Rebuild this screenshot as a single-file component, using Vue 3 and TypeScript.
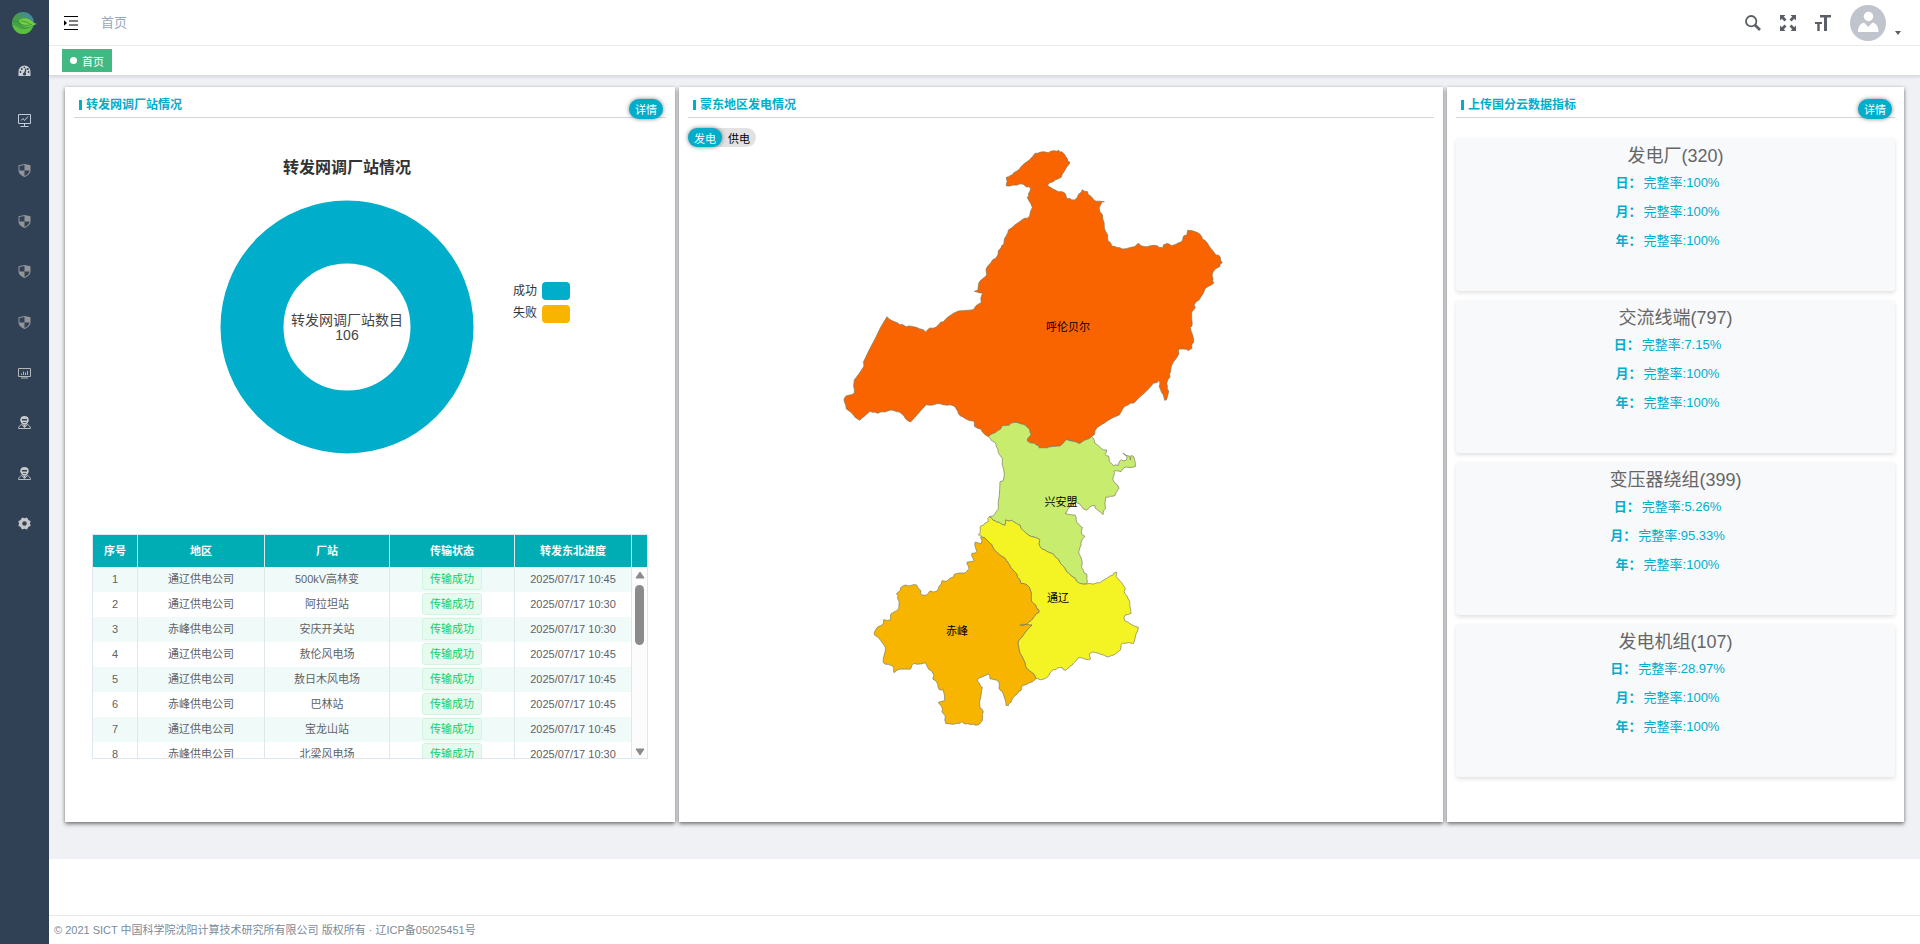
<script setup lang="ts">
import { ref } from 'vue'

interface MenuItem { icon: string; label: string }
interface Station { region: string; name: string; time: string }
interface Metric { title: string; rows: { label: string; value: string }[] }
interface Area { name: string; color: string; x: number; y: number; shape: string }

const menu: MenuItem[] = [
  { icon: 'dashboard', label: '首页' },
  { icon: 'monitor', label: '监控' },
  { icon: 'shield', label: '校验一' },
  { icon: 'shield', label: '校验二' },
  { icon: 'shield', label: '校验三' },
  { icon: 'shield', label: '校验四' },
  { icon: 'screen', label: '统计' },
  { icon: 'people', label: '用户' },
  { icon: 'people', label: '角色' },
  { icon: 'gear', label: '设置' },
]

const columns = ['序号', '地区', '厂站', '传输状态', '转发东北进度']

const stations: Station[] = [
  { region: '通辽供电公司', name: '500kV高林变', time: '2025/07/17 10:45' },
  { region: '通辽供电公司', name: '阿拉坦站', time: '2025/07/17 10:30' },
  { region: '赤峰供电公司', name: '安庆开关站', time: '2025/07/17 10:30' },
  { region: '通辽供电公司', name: '敖伦风电场', time: '2025/07/17 10:45' },
  { region: '通辽供电公司', name: '敖日木风电场', time: '2025/07/17 10:45' },
  { region: '赤峰供电公司', name: '巴林站', time: '2025/07/17 10:45' },
  { region: '通辽供电公司', name: '宝龙山站', time: '2025/07/17 10:45' },
  { region: '赤峰供电公司', name: '北梁风电场', time: '2025/07/17 10:30' },
]

function metric(title: string, day: string, month: string, year: string): Metric {
  return {
    title,
    rows: [
      { label: '日：', value: day },
      { label: '月：', value: month },
      { label: '年：', value: year },
    ],
  }
}

const metrics: Metric[] = [
  metric('发电厂(320)', '100%', '100%', '100%'),
  metric('交流线端(797)', '7.15%', '100%', '100%'),
  metric('变压器绕组(399)', '5.26%', '95.33%', '100%'),
  metric('发电机组(107)', '28.97%', '100%', '100%'),
]

const mode = ref<'gen' | 'supply'>('gen')

const areas: Area[] = [
  {
    name: '呼伦贝尔', color: '#fa6400', x: 380, y: 184,
    shape: '645 70 670 65 685 68 715 61 735 75 750 97 727 132 700 155 682 166 715 185 735 190 741 206 763 210 787 179 803 185 821 209 853 215 838 235 848 262 853 293 863 315 864 332 876 349 908 357 943 350 955 340 975 350 1002 346 1030 356 1031 344 1047 342 1055 347 1085 335 1089 322 1100 316 1103 301 1131 307 1155 331 1188 375 1201 382 1207 398 1199 410 1178 429 1181 460 1155 477 1137 510 1122 525 1126 532 1115 546 1116 588 1111 592 1121 630 1116 655 1105 662 1078 657 1072 680 1053 715 1050 740 1043 750 1046 783 1040 809 1034 811 1030 795 1020 775 1018 751 1000 760 942 819 912 831 898 855 860 874 831 893 824 913 814 920 779 941 740 929 728 942 687 951 658 954 644 940 622 933 633 913 628 896 616 886 585 877 567 886 547 887 532 903 505 920 487 906 483 898 463 889 461 873 420 857 402 828 360 821 319 824 272 876 243 850 215 840 178 848 150 844 119 871 79 837 74 803 103 789 103 749 131 710 130 697 201 560 235 580 260 590 284 591 317 606 325 597 348 592 370 575 402 549 460 539 481 520 488 489 463 484 474 480 480 453 500 435 502 410 527 385 535 362 552 335 565 300 608 268 629 258 637 233 622 203 632 175 610 163 580 165 560 168 559 142 577 135 605 108',
  },
  {
    name: '兴安盟', color: '#c8ec6e', x: 373, y: 359,
    shape: '505 920 532 903 547 887 567 886 585 877 616 886 628 896 633 913 622 933 644 940 658 954 687 951 728 942 740 929 779 941 814 920 830 943 845 957 860 960 855 973 866 978 868 995 880 1007 895 1006 904 989 918 991 920 977 909 969 930 979 931 990 934 976 944 990 946 1010 912 1013 903 1025 881 1024 878 1045 897 1075 885 1097 857 1101 857 1135 849 1154 832 1139 824 1126 810 1130 800 1140 785 1130 770 1118 752 1128 742 1140 735 1150 765 1155 771 1178 788 1193 785 1212 795 1219 783 1238 777 1272 785 1290 785 1310 800 1332 800 1362 770 1354 740 1325 705 1280 675 1260 660 1250 658 1228 625 1215 600 1185 575 1171 557 1170 555 1186 530 1176 508 1160 525 1152 535 1137 540 1055 550 1052 547 985 535 968 528 943',
  },
  {
    name: '通辽', color: '#f4f424', x: 370, y: 455,
    shape: '508 1160 530 1176 555 1186 557 1170 575 1171 600 1185 625 1215 658 1228 660 1250 675 1260 705 1280 740 1325 770 1354 800 1362 840 1358 870 1338 890 1326 893 1345 916 1375 914 1390 930 1422 933 1450 912 1462 914 1472 955 1492 941 1540 907 1539 895 1565 862 1581 850 1575 820 1566 808 1572 812 1587 775 1583 757 1605 737 1621 727 1613 700 1619 669 1648 648 1646 616 1608 600 1570 595 1533 636 1485 600 1486 625 1477 657 1447 640 1420 632 1383 620 1364 603 1361 585 1327 560 1292 525 1262 510 1240 495 1224 475 1215 482 1188 505 1175',
  },
  {
    name: '赤峰', color: '#f8b500', x: 269, y: 488,
    shape: '482 1220 495 1224 510 1240 525 1262 560 1292 585 1327 603 1361 620 1364 632 1383 640 1420 657 1447 625 1477 600 1486 636 1485 595 1533 600 1570 616 1608 648 1646 607 1667 603 1682 580 1702 565 1727 558 1726 555 1708 540 1680 537 1656 510 1646 505 1632 480 1643 472 1653 487 1672 480 1733 490 1745 482 1778 468 1786 435 1782 425 1775 420 1780 378 1781 376 1758 366 1745 364 1728 355 1717 374 1712 370 1678 357 1678 353 1662 338 1647 340 1633 316 1598 300 1602 282 1600 272 1617 240 1617 222 1628 217 1607 190 1598 196 1551 163 1515 165 1503 190 1480 191 1469 212 1469 213 1452 236 1436 233 1405 229 1391 242 1373 257 1365 290 1365 303 1382 304 1394 312 1396 330 1383 350 1384 366 1352 382 1352 403 1333 435 1329 447 1316 441 1297 463 1293 456 1270 471 1265 466 1236 484 1242',
  },
]

type Point = [number, number]

// Offsets depend only on the midpoint, so neighbouring areas keep a common border.
function roughen(points: Point[]): Point[] {
  return points.flatMap((a, i): Point[] => {
    const b = points[(i + 1) % points.length]
    if (Math.hypot(b[0] - a[0], b[1] - a[1]) < 12) return [a]
    const x = (a[0] + b[0]) / 2
    const y = (a[1] + b[1]) / 2
    return [a, [x + Math.sin(x * 12.9 + y * 7.2) * 2.5, y + Math.sin(x * 5.1 + y * 17.3) * 2.5]]
  })
}

function outline(shape: string): string {
  const n = shape.split(' ').map(Number)
  const points: Point[] = []
  for (let i = 0; i < n.length; i += 2) points.push([n[i], n[i + 1]])
  return roughen(roughen(points)).map(([x, y]) => `${x.toFixed(1)},${y.toFixed(1)}`).join(' ')
}
</script>

<template>
  <div class="app">
    <aside class="sidebar">
      <a class="logo" href="#" aria-label="SICT">
        <svg width="27" height="24" viewBox="0 0 27 24">
          <defs>
            <linearGradient id="globe" x1="0" y1="1" x2="1" y2="0">
              <stop offset="0" stop-color="#3fae3c" />
              <stop offset="0.5" stop-color="#469b4c" />
              <stop offset="1" stop-color="#4382c4" />
            </linearGradient>
          </defs>
          <circle cx="12" cy="12" r="11" fill="url(#globe)" />
          <path d="M1.500 14c3 0 5 3 9 4s8-1 11-3c-1 5-5 8-9.500 8S3 20 1.500 14z" fill="#5cbf3c" />
          <path d="M8 9.500c4-4 11-2 14 2l4 1.500-4.500 1.500c-5 2.500-11 1.500-13.500-5z" fill="#74cf3e" />
          <path d="M2 10c4-1 6 3 10 4s7 0 9-.8M10 10c3 0 6 1 9 3" stroke="#2f8a42" stroke-width=".8" fill="none" />
        </svg>
      </a>
      <nav class="menu">
        <a v-for="(item, i) in menu" :key="i" href="#" :aria-label="item.label">
          <svg v-if="item.icon === 'dashboard'" width="13" height="13" viewBox="0 0 13 13">
            <path d="M.5 12V7.500a6 6 0 0 1 12 0V12z" fill="#cdd0d3" />
            <path d="M6.500 10.500L8 4.500" stroke="#304156" stroke-width="1.300" />
            <circle cx="6.500" cy="10" r="1.600" fill="#304156" />
            <g fill="#304156"><circle cx="2.500" cy="8" r=".9" /><circle cx="3.700" cy="5" r=".9" /><circle cx="6.300" cy="3.400" r=".8" /><circle cx="9.800" cy="5" r=".9" /><circle cx="10.600" cy="8" r=".9" /></g>
          </svg>
          <svg v-else-if="item.icon === 'monitor'" width="13" height="13" viewBox="0 0 13 13" fill="none" stroke="#bfcbd9">
            <path d="M.5 .5h12v9H.5zM6.500 9v3M2.500 12.500h8M3 6.500l2-2 1.500 2 3.500-4" />
          </svg>
          <svg v-else-if="item.icon === 'shield'" width="13" height="13" viewBox="0 0 13 13">
            <path d="M6.500 0l6 1.200v5c0 3-2.500 5.500-6 6.800C3 11.700.5 9.200.5 6.200v-5z" fill="#929495" />
            <path d="M1.500 2l5-1v5.500h-5zM6.500 6.500h5c-.3 2.500-2.200 4.200-5 5.400z" fill="#304156" />
          </svg>
          <svg v-else-if="item.icon === 'screen'" width="13" height="13" viewBox="0 0 13 13" fill="none" stroke="#b4b7ba">
            <path d="M.5 2.500h12v8H.5zM3 12h7M3.500 9V7.500M5.500 9V5.500M7.500 9V6.500M9.500 9V5" />
          </svg>
          <svg v-else-if="item.icon === 'people'" width="13" height="13" viewBox="0 0 13 13">
            <path d="M2.200 4.500C2.200 1.300 3.800 0 6.500 0s4.300 1.300 4.300 4.500l-.8 2-1.500 2h-4L3 6.500z" fill="#c8c9ca" />
            <path d="M4 3h5v1.600H4zM4.800 6.300h3.400v.8H4.800z" fill="#304156" />
            <path d="M.5 12.500C.5 10.500 2 9.300 3.800 8.500l2.700 3.200 2.700-3.200c1.800.8 3.300 2 3.300 4z" fill="none" stroke="#b9bcbf" />
            <path d="M5 8.500h3l-1.500 3z" fill="#c8c9ca" />
          </svg>
          <svg v-else width="13" height="13" viewBox="0 0 13 13">
            <path d="M4 .6l2.500.7L9 .6l1.400 2.500 2.300 1.200-.8 2.200.8 2.200-2.300 1.200L9 12.400l-2.500-.7-2.500.7-1.400-2.500L.3 8.700l.8-2.200-.8-2.200 2.300-1.200z" fill="#c3c5c7" />
            <circle cx="6.500" cy="6.500" r="2.200" fill="#304156" />
          </svg>
        </a>
      </nav>
    </aside>

    <div class="page">
      <header class="navbar">
        <button class="icon-btn" type="button" aria-label="展开菜单">
          <svg width="14" height="14" viewBox="0 0 14 14">
            <path d="M0 .5h14M5 5h9M5 9h9M0 13.500h14" stroke="#000" stroke-width="1.200" />
            <path d="M0 4.300L3 7 0 9.700z" />
          </svg>
        </button>
        <a class="crumb" href="#">首页</a>
        <div class="tools">
          <button class="icon-btn" type="button" aria-label="搜索">
            <svg width="16" height="16" viewBox="0 0 16 16" fill="none" stroke="#5a5e66">
              <circle cx="6.200" cy="6.200" r="5.200" stroke-width="1.800" />
              <path d="M10 10l5 5" stroke-width="2.600" />
            </svg>
          </button>
          <button class="icon-btn" type="button" aria-label="全屏">
            <svg width="16" height="16" viewBox="0 0 16 16" fill="#5a5e66">
              <path id="corner" d="M0 0h5.500L3.800 1.800l2.700 2.700-2 2-2.700-2.700L0 5.500z" />
              <use href="#corner" transform="rotate(90 8 8)" />
              <use href="#corner" transform="rotate(180 8 8)" />
              <use href="#corner" transform="rotate(270 8 8)" />
            </svg>
          </button>
          <button class="icon-btn" type="button" aria-label="字号">
            <svg width="16" height="16" viewBox="0 0 16 16" fill="#5a5e66">
              <path d="M5 0h11v2.500h-4V16H9V2.500H5zM0 7h7v2H4.700v7h-2.400V9H0z" />
            </svg>
          </button>
          <button class="avatar" type="button" aria-label="用户">
            <svg width="36" height="36" viewBox="0 0 36 36">
              <circle cx="18" cy="18" r="18" fill="#c0c4cc" />
              <circle cx="18.500" cy="11.500" r="4.700" fill="#fff" />
              <path d="M8 27c0-5 2-8.500 6-9.500l4.300 4.500 4.300-4.500c4 1 5.900 4.500 5.900 9.500z" fill="#fff" />
            </svg>
            <svg class="caret" width="6" height="4" viewBox="0 0 6 4"><path d="M0 0h6L3 4z" fill="#5a5e66" /></svg>
          </button>
        </div>
      </header>

      <div class="tags">
        <a class="tag-view" href="#"><span class="dot"></span>首页</a>
      </div>

      <main class="board">
        <section class="card">
          <div class="card-head">
            <h2>转发网调厂站情况</h2>
            <button class="pill" type="button">详情</button>
          </div>
          <svg class="chart" viewBox="0 0 592 416">
            <text class="chart-title" x="273" y="55">转发网调厂站情况</text>
            <circle cx="273" cy="209" r="95" fill="none" stroke="#00aecb" stroke-width="63" />
            <text class="chart-total" x="273" y="207">转发网调厂站数目</text>
            <text class="chart-total" x="273" y="222">106</text>
            <text class="legend" x="463" y="177">成功</text>
            <text class="legend" x="463" y="199">失败</text>
            <rect x="468" y="164" width="28" height="18" rx="4" fill="#00aecb" />
            <rect x="468" y="187" width="28" height="18" rx="4" fill="#f8b500" />
          </svg>
          <div class="grid-box">
            <div class="scroller">
              <table>
                <colgroup><col class="c1" /><col class="c2" /><col class="c3" /><col class="c3" /><col /></colgroup>
                <thead>
                  <tr><th v-for="c in columns" :key="c" scope="col">{{ c }}</th></tr>
                </thead>
                <tbody>
                  <tr v-for="(s, i) in stations" :key="s.name">
                    <td>{{ i + 1 }}</td>
                    <td>{{ s.region }}</td>
                    <td>{{ s.name }}</td>
                    <td><span class="status">传输成功</span></td>
                    <td>{{ s.time }}</td>
                  </tr>
                </tbody>
              </table>
            </div>
            <div class="rail">
              <div class="rail-head"></div>
              <div class="rail-body">
                <svg width="10" height="8" viewBox="0 0 10 8"><path d="M5 1l4 6H1z" fill="#8b8b8b" stroke="#8b8b8b" stroke-linejoin="round" /></svg>
                <div class="thumb"></div>
                <svg width="10" height="8" viewBox="0 0 10 8"><path d="M5 7l4-6H1z" fill="#8b8b8b" stroke="#8b8b8b" stroke-linejoin="round" /></svg>
              </div>
            </div>
          </div>
        </section>

        <section class="card">
          <div class="card-head"><h2>蒙东地区发电情况</h2></div>
          <div class="switch">
            <button type="button" :class="{ active: mode === 'gen' }" @click="mode = 'gen'">发电</button>
            <button type="button" :class="{ active: mode === 'supply' }" @click="mode = 'supply'">供电</button>
          </div>
          <svg class="map" viewBox="0 0 746 600">
            <g transform="translate(132 -17) scale(.33333)">
              <polygon v-for="a in areas" :key="a.name" :points="outline(a.shape)" :fill="a.color" stroke="#77775f" stroke-width="2" stroke-linejoin="round" />
            </g>
            <text v-for="a in areas" :key="a.name" :x="a.x" :y="a.y">{{ a.name }}</text>
          </svg>
        </section>

        <section class="card">
          <div class="card-head">
            <h2>上传国分云数据指标</h2>
            <button class="pill" type="button">详情</button>
          </div>
          <div class="metrics">
            <article v-for="m in metrics" :key="m.title" class="metric">
              <h3>{{ m.title }}</h3>
              <p v-for="r in m.rows" :key="r.label"><b>{{ r.label }}</b><span>完整率:{{ r.value }}</span></p>
            </article>
          </div>
        </section>
      </main>

      <footer class="footer">© 2021 SICT 中国科学院沈阳计算技术研究所有限公司 版权所有 · 辽ICP备05025451号</footer>
    </div>
  </div>
</template>

<style>
body { margin: 0; }
</style>

<style scoped>
.app {
  display: flex;
  min-height: 100vh;
  font-family: "Liberation Sans", "Noto Sans CJK SC", sans-serif;
  font-size: 11px;
  color: #606266;
  background: #fff;
}
.app *, .app *::before { box-sizing: border-box; }
button { font: inherit; border: 0; padding: 0; background: none; cursor: pointer; }
a { text-decoration: none; color: inherit; }
h2, h3, p { margin: 0; }
svg { display: block; }

.sidebar { flex: 0 0 49px; background: #304156; }
.logo { display: flex; height: 45px; padding-left: 11px; align-items: center; }
.menu { display: grid; grid-template-rows: repeat(10, 1fr); height: 504px; }
.menu a { display: flex; align-items: center; justify-content: center; }

.page { flex: 1; min-width: 0; display: flex; flex-direction: column; }
.navbar {
  display: flex;
  align-items: center;
  height: 46px;
  padding: 0 19px 0 15px;
  border-bottom: 1px solid #f0f1f3;
}
.crumb { margin-left: 23px; font-size: 13px; line-height: 20px; color: #97a8be; }
.tools { display: flex; align-items: center; gap: 19px; margin-left: auto; }
.avatar { display: flex; align-items: flex-end; gap: 9px; }
.caret { margin-bottom: 6px; }

.tags {
  display: flex;
  align-items: center;
  height: 30px;
  padding-left: 13px;
  background: #fff;
  border-bottom: 1px solid #d8dce5;
  box-shadow: 0 1px 3px rgba(0, 0, 0, 0.12);
  z-index: 1;
}
.tag-view {
  display: flex;
  align-items: center;
  gap: 5px;
  height: 23px;
  padding: 0 8px;
  color: #fff;
  background: #42b983;
}
.dot { width: 7px; height: 7px; border-radius: 50%; background: #fff; }

.board {
  display: grid;
  grid-template-columns: 610fr 764fr 457fr;
  gap: 4px;
  padding: 11px 16px 37px;
  background: #f0f1f5;
}
.card {
  min-width: 0;
  padding: 0 9px;
  background: #fff;
  box-shadow: 0 2px 4px rgba(0, 0, 0, 0.5), 0 0 3px rgba(0, 0, 0, 0.1);
}
.card-head {
  display: flex;
  align-items: center;
  justify-content: space-between;
  height: 31px;
  padding: 0 3px 0 5px;
  border-bottom: 1px solid #d3d5d8;
}
.card-head h2 {
  display: flex;
  align-items: center;
  gap: 4px;
  padding-top: 5px;
  font-size: 12px;
  line-height: 18px;
  color: #00aecb;
}
.card-head h2::before { content: ""; width: 3px; height: 10px; background: #00aecb; }
.pill {
  align-self: flex-end;
  height: 20px;
  margin-bottom: -2px;
  padding: 0 6px;
  border-radius: 10px;
  color: #fff;
  background: #00aecb;
  box-shadow: 0 0 4px rgba(0, 0, 0, 0.5);
}

.chart, .map { width: 100%; height: auto; }
.chart-title { font-size: 16px; font-weight: 700; fill: #333; text-anchor: middle; }
.chart-total { font-size: 14px; fill: #444; text-anchor: middle; }
.legend { font-size: 12px; fill: #333; text-anchor: end; }

.grid-box {
  display: flex;
  height: 225px;
  margin: 0 18px 63px;
  border: 1px solid #dfe6ec;
}
.scroller { flex: 1; overflow: hidden; }
table { width: 100%; table-layout: fixed; border-collapse: separate; border-spacing: 0; text-align: center; }
.c1 { width: 45px; }
.c2 { width: 127px; }
.c3 { width: 125px; }
th, td { padding: 0 0 2px; border-right: 1px solid #dfe6ec; }
th { height: 32px; color: #fff; background: #00adb5; }
td { height: 25px; line-height: 22px; }
tbody tr:nth-child(odd) { background: #f0faf9; }
.status {
  display: inline-block;
  height: 22px;
  padding: 0 7px;
  line-height: 20px;
  color: #13ce66;
  background: #e7faf0;
  border: 1px solid #d0f5e0;
  border-radius: 3px;
  vertical-align: top;
}
.rail { display: flex; flex-direction: column; flex: 0 0 15px; }
.rail-head { height: 32px; background: #00adb5; }
.rail-body {
  flex: 1;
  display: flex;
  flex-direction: column;
  align-items: center;
  gap: 6px;
  padding: 4px 0 2px;
  background: #fcfcfc;
}
.rail-body svg:last-child { margin-top: auto; }
.thumb { width: 9px; height: 60px; border-radius: 5px; background: #8b8b8b; }

.switch { display: inline-flex; height: 19px; margin-top: 10px; border-radius: 10px; background: #e2e2e2; vertical-align: top; }
.switch button { padding: 0 6px; border-radius: 10px; color: #000; }
.switch .active { color: #fff; background: #00aecb; box-shadow: 0 0 4px rgba(0, 0, 0, 0.5); }
.map text { font-size: 11px; fill: #000; text-anchor: middle; }

.metrics { display: grid; gap: 9px; padding-top: 20px; }
.metric {
  height: 153px;
  padding-top: 7px;
  border-radius: 3px;
  background: #f8f9fb;
  box-shadow: 0 2px 4px rgba(0, 0, 0, 0.12);
  text-align: center;
}
.metric h3 { font-size: 18px; font-weight: 400; line-height: 23px; color: #666; }
.metric p { display: flex; justify-content: center; gap: 2px; padding-right: 16px; font-size: 13px; line-height: 29px; color: #00aecb; }

.footer {
  margin-top: auto;
  padding-left: 5px;
  line-height: 28px;
  color: #7a8b9a;
  border-top: 1px solid #e7e7e7;
}
</style>
